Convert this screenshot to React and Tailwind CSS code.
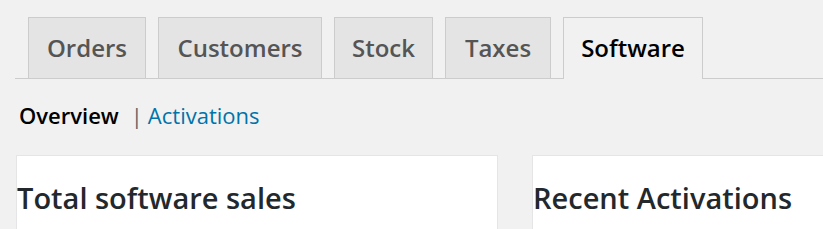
import React from "react";

const tabs = [
  { label: "Orders", w: "w-[118px]" },
  { label: "Customers", w: "w-[164px]" },
  { label: "Stock", w: "w-[99px]" },
  { label: "Taxes", w: "w-[106px]" },
  { label: "Software", w: "w-[140px]", active: true },
];

export default function App() {
  return (
    <div
      className="w-full h-[229px] bg-[#f1f1f1] overflow-hidden"
      style={{ fontFamily: '"Open Sans", "Liberation Sans", sans-serif' }}
    >
      <div className="ml-[15px] pt-[17px] pl-[13px] border-b border-[#ccc] flex items-end gap-[12px] h-[79px]">
        {tabs.map((t) =>
          t.active ? (
            <div
              key={t.label}
              className={`${t.w} h-[62px] -mb-px border border-b-0 border-[#ccc] bg-[#f1f1f1] flex items-center justify-center pb-[1px] text-[24px] leading-none font-semibold text-black`}
            >
              {t.label}
            </div>
          ) : (
            <div
              key={t.label}
              className={`${t.w} h-[61px] border border-b-0 border-[#ccc] bg-[#e4e4e4] flex items-center justify-center text-[24px] leading-none font-semibold text-[#555]`}
            >
              {t.label}
            </div>
          )
        )}
      </div>
      <div className="h-[76px] flex items-center pl-[19px] pb-[4px] text-[22px] leading-none">
        <span className="font-semibold text-black">Overview</span>
        <span className="text-[#666] ml-[12px] mr-[5px] font-normal">|</span>
        <span className="text-[#0073aa]">Activations</span>
      </div>
      <div className="flex gap-[34px] pl-[16px]">
        <div className="w-[482px] h-[120px] bg-white border border-[#e5e5e5] pt-[27px]">
          <h2 className="text-[29px] leading-none font-semibold text-[#23282d]">Total software sales</h2>
        </div>
        <div className="flex-1 h-[120px] bg-white border border-[#e5e5e5] border-r-0 pt-[27px]">
          <h2 className="text-[29px] leading-none font-semibold text-[#23282d]">Recent Activations</h2>
        </div>
      </div>
    </div>
  );
}
